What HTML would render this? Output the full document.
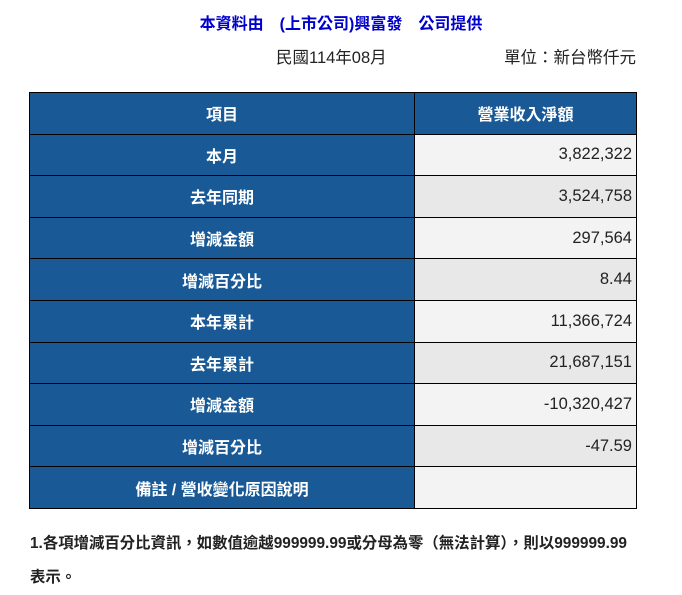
<!DOCTYPE html>
<html><head><meta charset="utf-8"><style>
body{margin:0;background:#fff;font-family:"Liberation Sans","Noto Sans CJK TC",sans-serif;width:682px;height:589px;position:relative;overflow:hidden}
.t{position:absolute;top:10px;left:0;width:682px;text-align:center;color:#0000cc;font-weight:bold;font-size:16px;white-space:pre}
.d{position:absolute;top:44px;left:276px;font-size:16.5px;color:#222}
.u{position:absolute;top:44px;right:46px;font-size:16.5px;color:#222}
table{position:absolute;left:29px;top:92px;width:608px;border-collapse:collapse}
td{border:1.5px solid #000;height:40.6px;padding:0;font-size:16px}
td.l{background:#195a96;color:#fff;font-weight:bold;text-align:center;width:384px}
td.r{text-align:right;padding-right:4px;color:#222;font-size:16.5px}
tr:nth-child(even) td.r{background:#f3f3f3}
tr:nth-child(odd) td.r{background:#e8e8e8}
tr.h td{background:#195a96;color:#fff;font-weight:bold;text-align:center;padding:0}
.n{position:absolute;left:30px;top:527px;font-size:15.4px;font-weight:bold;color:#222;line-height:34px;width:640px}
</style></head><body>
<div class="t">本資料由　(上市公司)興富發　公司提供</div>
<div class="d">民國114年08月</div>
<div class="u">單位：新台幣仟元</div>
<table>
<tr class="h"><td class="l">項目</td><td>營業收入淨額</td></tr>
<tr><td class="l">本月</td><td class="r">3,822,322</td></tr>
<tr><td class="l">去年同期</td><td class="r">3,524,758</td></tr>
<tr><td class="l">增減金額</td><td class="r">297,564</td></tr>
<tr><td class="l">增減百分比</td><td class="r">8.44</td></tr>
<tr><td class="l">本年累計</td><td class="r">11,366,724</td></tr>
<tr><td class="l">去年累計</td><td class="r">21,687,151</td></tr>
<tr><td class="l">增減金額</td><td class="r">-10,320,427</td></tr>
<tr><td class="l">增減百分比</td><td class="r">-47.59</td></tr>
<tr><td class="l">備註 / 營收變化原因說明</td><td class="r"></td></tr>
</table>
<div class="n">1.各項增減百分比資訊，如數值逾越999999.99或分母為零（無法計算），則以999999.99<br>表示。</div>
</body></html>
